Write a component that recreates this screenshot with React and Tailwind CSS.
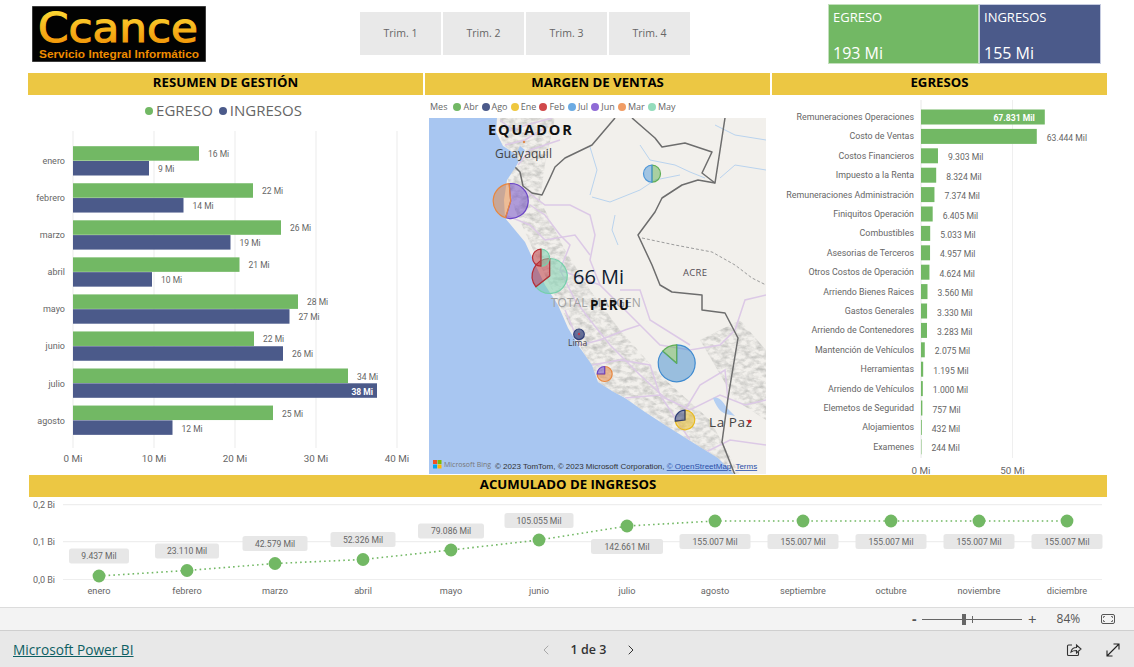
import React from "react";
import { ChevronLeft, ChevronRight } from "lucide-react";

const GREEN = "#72b864";
const NAVY = "#4b5a8a";

const months = [
  ["enero", 199, 149, "16 Mi", "9 Mi"],
  ["febrero", 253, 183.5, "22 Mi", "14 Mi"],
  ["marzo", 281, 230.5, "26 Mi", "19 Mi"],
  ["abril", 239.5, 152, "21 Mi", "10 Mi"],
  ["mayo", 298, 289.5, "28 Mi", "27 Mi"],
  ["junio", 254, 283, "22 Mi", "26 Mi"],
  ["julio", 348, 377, "34 Mi", "38 Mi"],
  ["agosto", 273, 172.5, "25 Mi", "12 Mi"],
];

const egresos = [
  ["Remuneraciones Operaciones", 67.831, "67.831 Mil"],
  ["Costo de Ventas", 63.444, "63.444 Mil"],
  ["Costos Financieros", 9.303, "9.303 Mil"],
  ["Impuesto a la Renta", 8.324, "8.324 Mil"],
  ["Remuneraciones Administración", 7.374, "7.374 Mil"],
  ["Finiquitos Operación", 6.405, "6.405 Mil"],
  ["Combustibles", 5.033, "5.033 Mil"],
  ["Asesorias de Terceros", 4.957, "4.957 Mil"],
  ["Otros Costos de Operación", 4.624, "4.624 Mil"],
  ["Arriendo Bienes Raices", 3.56, "3.560 Mil"],
  ["Gastos Generales", 3.33, "3.330 Mil"],
  ["Arriendo de Contenedores", 3.283, "3.283 Mil"],
  ["Mantención de Vehículos", 2.075, "2.075 Mil"],
  ["Herramientas", 1.195, "1.195 Mil"],
  ["Arriendo de Vehículos", 1.0, "1.000 Mil"],
  ["Elemetos de Seguridad", 0.757, "757 Mil"],
  ["Alojamientos", 0.432, "432 Mil"],
  ["Examenes", 0.244, "244 Mil"],
];

const acumulado = [
  ["enero", 99, 576, 556, 60, "9.437 Mil"],
  ["febrero", 187, 570.5, 551, 64, "23.110 Mil"],
  ["marzo", 275, 563.5, 543.5, 65, "42.579 Mil"],
  ["abril", 363, 559.5, 539.5, 65, "52.326 Mil"],
  ["mayo", 451, 550, 531, 66, "79.086 Mil"],
  ["junio", 539, 540, 520.5, 69, "105.055 Mil"],
  ["julio", 627, 526, 546.5, 72, "142.661 Mil"],
  ["agosto", 715, 521, 541.5, 71, "155.007 Mil"],
  ["septiembre", 803, 521, 541.5, 71, "155.007 Mil"],
  ["octubre", 891, 521, 541.5, 71, "155.007 Mil"],
  ["noviembre", 979, 521, 541.5, 71, "155.007 Mil"],
  ["diciembre", 1067, 521, 541.5, 71, "155.007 Mil"],
];

const legendMes = [
  ["Abr", "#72b864"],
  ["Ago", "#4b5a8a"],
  ["Ene", "#efc83f"],
  ["Feb", "#d0494a"],
  ["Jul", "#6cabe3"],
  ["Jun", "#8f6bd6"],
  ["Mar", "#f09c64"],
  ["May", "#94dcbc"],
];

function Title({ className, children }) {
  return (
    <div className={"flex h-[22px] items-center justify-center bg-[#ecc743] pb-[3px] font-['Open_Sans',sans-serif] text-[13.2px] font-bold text-black " + className}>
      {children}
    </div>
  );
}

function Logo() {
  return (
    <svg viewBox="0 0 174 56" className="h-[56px] w-[174px] shrink-0">
      <defs>
        <linearGradient id="lg" x1="0" y1="0" x2="0" y2="1">
          <stop offset="0" stopColor="#ffe23a" />
          <stop offset="1" stopColor="#f08a00" />
        </linearGradient>
      </defs>
      <rect width="174" height="56" fill="#020202" stroke="#777" strokeWidth="1" />
      <text x="6" y="36" textLength="160" lengthAdjust="spacingAndGlyphs" fill="url(#lg)" stroke="url(#lg)" strokeWidth="1.1" className="font-['DejaVu_Sans',sans-serif]" fontSize="40">Ccance</text>
      <text x="7" y="51.5" textLength="160" lengthAdjust="spacingAndGlyphs" fill="#ef8c00" className="font-['Liberation_Sans',sans-serif]" fontSize="10.5" fontWeight="700">Servicio Integral Informático</text>
    </svg>
  );
}

function BarChart() {
  return (
    <svg viewBox="28 125 396 349" className="block h-[349px] w-[396px] overflow-visible font-[Roboto,sans-serif]">
      {[73, 154, 235, 316, 397].map((x, i) => (
        <g key={x}>
          <line x1={x} x2={x} y1="131" y2="448" stroke="#efefef" strokeWidth="1.2" />
          <text x={x} y="462" textAnchor="middle" fontSize="9.8" fill="#666">{i * 10} Mi</text>
        </g>
      ))}
      {months.map(([m, g, b, gl, bl], i) => {
        const y = 146.2 + i * 37.05;
        const dark = i === 6;
        return (
          <g key={m}>
            <text x="65" y={y + 18} textAnchor="end" fontSize="9" fill="#666">{m}</text>
            <rect x="73" y={y} width={g - 73} height="14.5" fill={GREEN} />
            <rect x="73" y={y + 14.8} width={b - 73} height="14.5" fill={NAVY} />
            <text x={g + 9} y={y + 11} fontSize="8.5" fill="#666">{gl}</text>
            {dark ? (
              <text x={b - 4} y={y + 26} textAnchor="end" fontSize="8.5" fontWeight="700" fill="#fff">{bl}</text>
            ) : (
              <text x={b + 9} y={y + 26} fontSize="8.5" fill="#666">{bl}</text>
            )}
          </g>
        );
      })}
    </svg>
  );
}

function pie(cx, cy, r, from, to) {
  const p = (a) => [cx + r * Math.sin((a * Math.PI) / 180), cy - r * Math.cos((a * Math.PI) / 180)];
  const [x1, y1] = p(from);
  const [x2, y2] = p(to);
  const large = (to - from + 360) % 360 > 180 ? 1 : 0;
  return `M${cx} ${cy}L${x1} ${y1}A${r} ${r} 0 ${large} 1 ${x2} ${y2}Z`;
}

function Wedge({ c, r, from, to, color }) {
  return <path d={pie(c[0], c[1], r, from, to)} fill={color} fillOpacity="0.5" stroke={color} strokeWidth="1.2" strokeLinejoin="round" />;
}

function MapView() {
  const land = "M497 118L496 132L503 146L514 153L519 161L515 168L507 180L504 200L505 218L515 230L525 242L531 255L535 264L545 285L558 305L568 328L580 348L592 365L598 382L612 391L625 398L645 412L665 425L692 442L718 458L735 475L766 475L766 118Z";
  return (
    <svg viewBox="429 118 337 356" className="block h-[356px] w-[337px]">
      <defs>
        <filter id="relief" x="0" y="0" width="100%" height="100%">
          <feTurbulence type="fractalNoise" baseFrequency="0.14 0.22" numOctaves="3" seed="7" />
          <feColorMatrix values="0 0 0 0 0.52  0 0 0 0 0.52  0 0 0 0 0.5  1.9 0 0 0 -0.68" />
          <feComposite in2="SourceGraphic" operator="in" />
        </filter>
        <clipPath id="landclip"><path d={land} /></clipPath>
      </defs>
      <rect x="429" y="118" width="337" height="356" fill="#a8c6f1" />
      <path d={land} fill="#f2f0ec" />
      <g clipPath="url(#landclip)">
        <path d="M500 118L555 118L545 165L540 200L565 250L590 290L620 330L660 375L710 420L740 475L715 475L645 425L600 385L572 330L540 265L515 210L503 160Z" filter="url(#relief)" fill="#000" />
        <path d="M700 340L740 320L766 350L766 420L735 400Z" filter="url(#relief)" fill="#000" />
        <g fill="none" stroke="#dcc9e6" strokeWidth="1.5">
          <path d="M500 120L512 130L530 124L552 118M505 145L525 140L545 128M518 165L530 150L560 140M525 190L545 205L570 205L590 215L595 235L590 260L600 285L625 310L640 325L660 345L690 350L720 345L735 330L745 300L766 295" />
          <path d="M530 205L545 215L560 235L570 245L560 270L575 300L590 320L610 345L640 375L665 398L690 410L720 395L745 405L766 400" />
          <path d="M565 310L580 345L600 340L625 330L640 325M592 365L620 360L650 365L660 395L690 440M625 398L660 395M700 455L730 440L766 445M620 290L640 290L650 320L690 345" />
          <path d="M545 240L575 235L590 255M560 270L600 285M505 215L530 225L545 240M685 410L700 385L725 370L728 400" />
        </g>
        <g fill="none" stroke="#b9d3ee" strokeWidth="1">
          <path d="M640 145L650 160L675 165L690 172L705 178M592 197L610 202L640 190L655 180L680 175M590 147L597 170L590 195M615 215L612 230L618 245M720 178L735 165L766 170M715 125L735 135L766 140" />
        </g>
        <path d="M713 398C718 396 722 400 727 408L735 416L726 414C720 412 716 406 713 398Z" fill="#b4cff2" />
        <path d="M520 146L525 150L522 155L517 152Z" fill="#a8c6f1" />
        <path d="M642 238L675 245L712 252L735 265L752 278L766 285" fill="none" stroke="#9b9b9b" strokeWidth="1" strokeDasharray="3 2" />
        <g fill="none" stroke="#6d6d6d" strokeWidth="1.5" strokeLinejoin="round">
          <path d="M615 118L592 145L565 158L555 167L550 178L542 195L532 193L523 186L520 172L515 167" />
          <path d="M632 118L655 138L662 147L685 143L712 152L702 173L715 183L725 118" />
          <path d="M715 183L698 180L682 185L662 198L655 212L638 235L652 265L660 285L672 292L702 295L702 310L725 313L738 338L728 398L722 442L735 475" />
        </g>
      </g>
      <g className="font-['Open_Sans',sans-serif]">
        <text x="488" y="135" fontSize="14.5" fontWeight="700" letterSpacing="1.9" fill="#111">EQUADOR</text>
        <text x="495" y="158" fontSize="12" letterSpacing="0.1" fill="#444">Guayaquil</text>
        <text x="683" y="276" fontSize="9.5" letterSpacing="0.3" fill="#554e55">ACRE</text>
        <text x="551" y="307" fontSize="12" fill="#a0a0a0">TOTAL MARGEN</text>
        <text x="590" y="310" fontSize="13.5" fontWeight="700" letterSpacing="1.3" fill="#111">PERU</text>
        <text x="568" y="346" fontSize="8.5" fill="#444">Lima</text>
        <text x="709" y="427" fontSize="13.5" letterSpacing="0.6" fill="#444">La Paz</text>
      </g>
      <circle cx="749.5" cy="421.5" r="1.7" fill="#d8262c" />
      <circle cx="524" cy="142" r="1.2" fill="#e08a4a" />

      <Wedge c={[652, 173.7]} r={8.5} from={0} to={180} color="#5fae55" />
      <Wedge c={[652, 173.7]} r={8.5} from={180} to={360} color="#4f97d8" />
      <Wedge c={[510.7, 201]} r={17.5} from={-5} to={197} color="#6b45c6" />
      <Wedge c={[510.7, 201]} r={17.5} from={197} to={355} color="#e8873f" />
      <Wedge c={[549.7, 276]} r={17.5} from={0} to={232} color="#75d0ab" />
      <Wedge c={[549.7, 276]} r={17.5} from={232} to={360} color="#b72c34" />
      <Wedge c={[541, 257.7]} r={8.5} from={0} to={180} color="#75d0ab" />
      <Wedge c={[541, 257.7]} r={8.5} from={180} to={360} color="#b72c34" />
      <circle cx="579" cy="334.3" r="5.3" fill="#2f3e78" fillOpacity="0.7" stroke="#2f3e78" strokeWidth="1.2" />
      <circle cx="579" cy="334" r="1.2" fill="#c0394a" />
      <Wedge c={[676.7, 363.3]} r={18.5} from={0} to={311} color="#3f8bd0" />
      <Wedge c={[676.7, 363.3]} r={18.5} from={311} to={360} color="#5fae55" />
      <Wedge c={[604.7, 374]} r={7.5} from={0} to={270} color="#e8873f" />
      <Wedge c={[604.7, 374]} r={7.5} from={270} to={360} color="#6b45c6" />
      <Wedge c={[685, 420]} r={9.8} from={0} to={263} color="#e8b91d" />
      <Wedge c={[685, 420]} r={9.8} from={263} to={360} color="#2f3e78" />

      <text x="573" y="284" fontSize="20" className="font-['Open_Sans',sans-serif]" fill="#101c30">66 Mi</text>

      <rect x="433" y="460" width="4" height="4" fill="#f25022" />
      <rect x="437.5" y="460" width="4" height="4" fill="#7fba00" />
      <rect x="433" y="464.5" width="4" height="4" fill="#00a4ef" />
      <rect x="437.5" y="464.5" width="4" height="4" fill="#ffb900" />
      <text x="444" y="467" fontSize="7" fill="#777" className="font-['Open_Sans',sans-serif]">Microsoft Bing</text>
      <text x="495" y="469" fontSize="8" fill="#333" className="font-['Liberation_Sans',sans-serif]">© 2023 TomTom, © 2023 Microsoft Corporation, <tspan fill="#2a4fa8" textDecoration="underline">© OpenStreetMap</tspan> <tspan fill="#2a4fa8" textDecoration="underline" dx="2">Terms</tspan></text>
    </svg>
  );
}

function EgresosChart() {
  const sx = 1.825;
  return (
    <svg viewBox="772 95 335 379" className="block h-[379px] w-[335px] overflow-visible font-[Roboto,sans-serif]">
      <line x1="921" x2="921" y1="100" y2="458" stroke="#e8e8e8" />
      <line x1="1012.5" x2="1012.5" y1="100" y2="458" stroke="#efefef" />
      {egresos.map(([n, v, l], i) => {
        const y = 109.5 + i * 19.4;
        const w = v * sx;
        return (
          <g key={n}>
            <text x="914" y={y + 10.5} textAnchor="end" fontSize="8.85" fill="#666">{n}</text>
            <rect x="921" y={y} width={w} height="15" fill={GREEN} />
            {i === 0 ? (
              <text x={921 + w - 10} y={y + 11.5} textAnchor="end" fontSize="8.6" fontWeight="700" fill="#fff">{l}</text>
            ) : (
              <text x={921 + w + 10} y={y + 12} fontSize="8.6" fill="#666">{l}</text>
            )}
          </g>
        );
      })}
      <text x="921" y="473.5" textAnchor="middle" fontSize="9.8" fill="#666">0 Mi</text>
      <text x="1012.5" y="473.5" textAnchor="middle" fontSize="9.8" fill="#666">50 Mi</text>
    </svg>
  );
}

function LineChart() {
  const path = acumulado.map((a) => `${a[1]},${a[2]}`).join(" ");
  return (
    <svg viewBox="0 497 1134 110" className="block h-[110px] w-[1134px] font-[Roboto,sans-serif]">
      {[[504.7, "0,2 Bi"], [541.7, "0,1 Bi"], [579.5, "0,0 Bi"]].map(([y, t]) => (
        <g key={t}>
          <line x1="63" x2="1102" y1={y} y2={y} stroke="#eeeeee" strokeWidth="1.2" />
          <text x="55" y={y + 3.5} textAnchor="end" fontSize="9" fill="#666">{t}</text>
        </g>
      ))}
      <polyline points={path} fill="none" stroke={GREEN} strokeWidth="1.6" strokeDasharray="1.6 3.2" />
      {acumulado.map(([m, x, y, ly, w, l]) => (
        <g key={m}>
          <rect x={x - w / 2} y={ly - 7.5} width={w} height="15" rx="2.5" fill="#e6e6e6" fillOpacity="0.95" />
          <text x={x} y={ly + 3.3} textAnchor="middle" fontSize="8.6" fill="#666">{l}</text>
          <circle cx={x} cy={y} r="6.4" fill={GREEN} />
          <text x={x} y="594" textAnchor="middle" fontSize="9.2" fill="#666">{m}</text>
        </g>
      ))}
    </svg>
  );
}

export default function App() {
  return (
    <div className="flex h-[667px] w-[1134px] flex-col overflow-hidden bg-white font-['Open_Sans',sans-serif]">
      <div className="flex h-[73px] shrink-0">
        <div className="ml-[32px] mt-[6px]"><Logo /></div>
        <div className="ml-[154px] mt-[12px] flex h-[43px] gap-[2px]">
          {["Trim. 1", "Trim. 2", "Trim. 3", "Trim. 4"].map((t) => (
            <div key={t} className="flex w-[81px] items-center justify-center bg-[#e9e9e9] pt-[1px] text-[10.5px] text-[#666]">{t}</div>
          ))}
        </div>
        <div className="ml-[137px] mt-[4px] flex h-[60px] w-[274px]">
          <div className="ml-[1px] flex w-[151px] flex-col justify-between border border-[#c3e0bc] bg-[#72b864] pl-[4px] text-white">
            <div className="pt-[2px] text-[13px] leading-[20px]">EGRESO</div>
            <div className="text-[16px] leading-[20px]">193 Mi</div>
          </div>
          <div className="flex w-[122px] flex-col justify-between border border-[#c5cbe0] bg-[#4b5a8a] pl-[4px] text-white">
            <div className="pt-[2px] text-[13px] leading-[20px]">INGRESOS</div>
            <div className="text-[16px] leading-[20px]">155 Mi</div>
          </div>
        </div>
      </div>

      <div className="flex h-[22px] shrink-0 gap-[2px] pl-[28px]">
        <Title className="w-[395px]">RESUMEN DE GESTIÓN</Title>
        <Title className="w-[345px]">MARGEN DE VENTAS</Title>
        <Title className="w-[335px]">EGRESOS</Title>
      </div>

      <div className="flex h-[379px] shrink-0 pl-[28px]">
        <div className="w-[396px] shrink-0">
          <div className="flex h-[30px] items-center justify-center gap-[3px] pr-[5px] pt-[1px] text-[15px] text-[#666]">
            <span className="h-[8px] w-[8px] rounded-full bg-[#72b864]" />
            <span>EGRESO</span>
            <span className="ml-[3px] h-[8px] w-[8px] rounded-full bg-[#4b5a8a]" />
            <span>INGRESOS</span>
          </div>
          <BarChart />
        </div>
        <div className="w-[348px] shrink-0 pl-[5px]">
          <div className="flex h-[23px] items-center gap-[2px] pl-[1px] text-[9px] text-[#666]">
            <span className="mr-[4px]">Mes</span>
            {legendMes.map(([t, c]) => (
              <React.Fragment key={t}>
                <span className="h-[8px] w-[8px] rounded-full" style={{ background: c }} />
                <span className="mr-[1.2px]">{t}</span>
              </React.Fragment>
            ))}
          </div>
          <MapView />
        </div>
        <EgresosChart />
      </div>

      <div className="h-[1px] shrink-0" />
      <div className="h-[22px] shrink-0 pl-[29px]">
        <Title className="w-[1078px]">ACUMULADO DE INGRESOS</Title>
      </div>
      <LineChart />

      <div className="flex h-[23px] shrink-0 items-center border-t border-[#dcdcdc] bg-[#f3f3f3] text-[#555]">
        <span className="ml-[912px] w-[10px] text-[14px] font-bold leading-none">-</span>
        <div className="relative h-[1px] w-[100px] bg-[#666]">
          <span className="absolute left-[40px] top-[-5px] h-[11px] w-[4px] bg-[#666]" />
          <span className="absolute left-[50px] top-[-3px] h-[7px] w-[1px] bg-[#666]" />
        </div>
        <span className="ml-[6px] text-[15px] leading-none">+</span>
        <span className="ml-[20px] text-[12px]">84%</span>
        <svg viewBox="0 0 14 10" className="ml-[21px] h-[10px] w-[14px]" fill="none" stroke="#555">
          <rect x="0.5" y="0.5" width="13" height="9" rx="1.5" />
          <path d="M2.5 4V2.5H4M10 2.5H11.5V4M11.5 6V7.5H10M4 7.5H2.5V6" strokeWidth="0.8" />
        </svg>
      </div>

      <div className="relative flex min-h-0 flex-1 items-center border-t border-[#cfcfcf] bg-[#e8e8e8] pt-[2px]">
        <a className="ml-[13px] font-['Open_Sans',sans-serif] text-[13.7px] text-[#0d5f63] underline">Microsoft Power BI</a>
        <div className="absolute left-[538px] flex w-[101px] items-center justify-between text-[#333]">
          <ChevronLeft size={16} color="#a8a8a8" strokeWidth={1.5} />
          <span className="text-[12.5px] font-semibold">1 de 3</span>
          <ChevronRight size={16} color="#333" strokeWidth={1.5} />
        </div>
        <svg viewBox="0 0 16 16" className="absolute left-[1066px] h-[16px] w-[16px]" fill="none" stroke="#333" strokeWidth="1.1">
          <path d="M6 3H2.5A1 1 0 0 0 1.5 4V12.5A1 1 0 0 0 2.5 13.5H11.5A1 1 0 0 0 12.5 12.5V10" />
          <path d="M5 10C5.5 7 8 5.5 10.5 5.5V3L15 7L10.5 11V8.5C8.5 8.5 6.5 8.8 5 10Z" />
        </svg>
        <svg viewBox="0 0 14 14" className="absolute left-[1106px] h-[14px] w-[14px]" fill="none" stroke="#222" strokeWidth="1.1">
          <path d="M1 13L13 1M7.5 1H13V6.5M1 7.5V13H6.5" />
        </svg>
      </div>
    </div>
  );
}
